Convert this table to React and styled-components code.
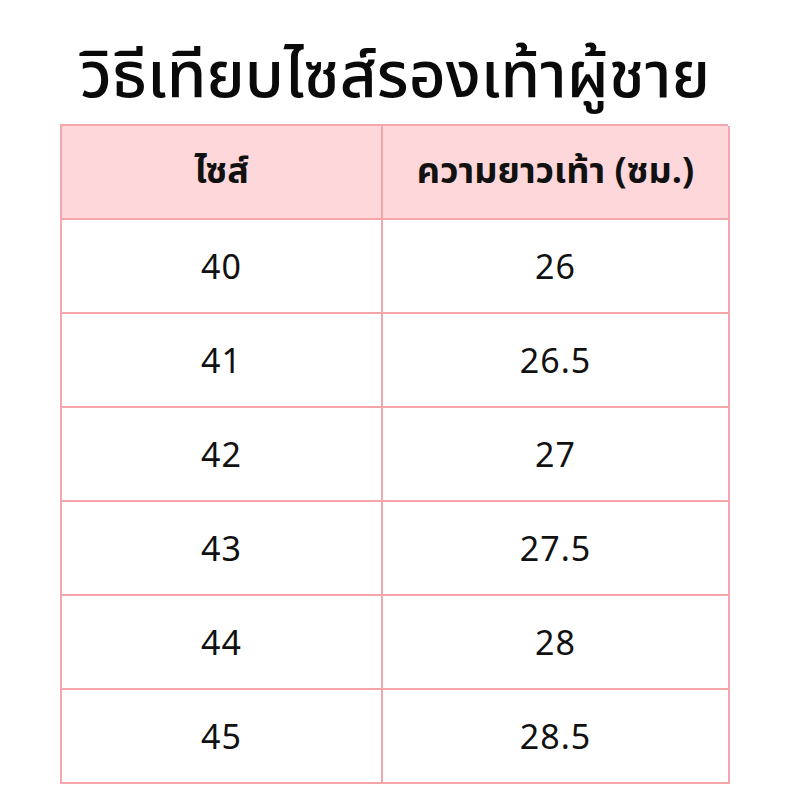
import React from "react";
import styled, { createGlobalStyle } from "styled-components";

const Global = createGlobalStyle`
  html, body { margin: 0; padding: 0; background: #ffffff; }
  body { font-family: "Noto Sans", "Noto Sans Thai", sans-serif; color: #111; }
`;

const Page = styled.div`
  width: 800px;
  height: 800px;
  display: flex;
  flex-direction: column;
  align-items: center;
  box-sizing: border-box;
  padding-top: 36px;
`;

const Title = styled.h1`
  margin: 0 0 4px -10px;
  font-family: "Noto Sans Thai", "Noto Sans", sans-serif;
  font-size: 64px;
  font-weight: 500;
  line-height: 84px;
  color: #0a0a0a;
`;

const Table = styled.div`
  width: 668px;
  margin-left: -12px;
  display: grid;
  grid-template-columns: 321px 347px;
  border-top: 2px solid #f4a6ab;
  border-left: 2px solid #f4a6ab;
  box-sizing: border-box;
`;

const Cell = styled.div`
  height: 94px;
  display: flex;
  align-items: center;
  justify-content: center;
  border-right: 2px solid #f4a6ab;
  border-bottom: 2px solid #f4a6ab;
  box-sizing: border-box;
  background: ${(p) => (p.$head ? "#fdd7d9" : "#ffffff")};
  font-family: ${(p) => (p.$head ? `"Noto Sans Thai", "Noto Sans", sans-serif` : `"Noto Sans", sans-serif`)};
  font-size: ${(p) => (p.$head ? "36px" : "34px")};
  font-weight: ${(p) => (p.$head ? 700 : 400)};
  letter-spacing: ${(p) => (p.$head ? "0" : "1px")};
  color: #111;
`;

const rows = [
  ["40", "26"],
  ["41", "26.5"],
  ["42", "27"],
  ["43", "27.5"],
  ["44", "28"],
  ["45", "28.5"],
];

export default function App() {
  return (
    <>
      <Global />
      <Page>
        <Title>วิธีเทียบไซส์รองเท้าผู้ชาย</Title>
        <Table>
          <Cell $head>ไซส์</Cell>
          <Cell $head>ความยาวเท้า (ซม.)</Cell>
          {rows.map(([a, b]) => (
            <React.Fragment key={a}>
              <Cell>{a}</Cell>
              <Cell>{b}</Cell>
            </React.Fragment>
          ))}
        </Table>
      </Page>
    </>
  );
}
